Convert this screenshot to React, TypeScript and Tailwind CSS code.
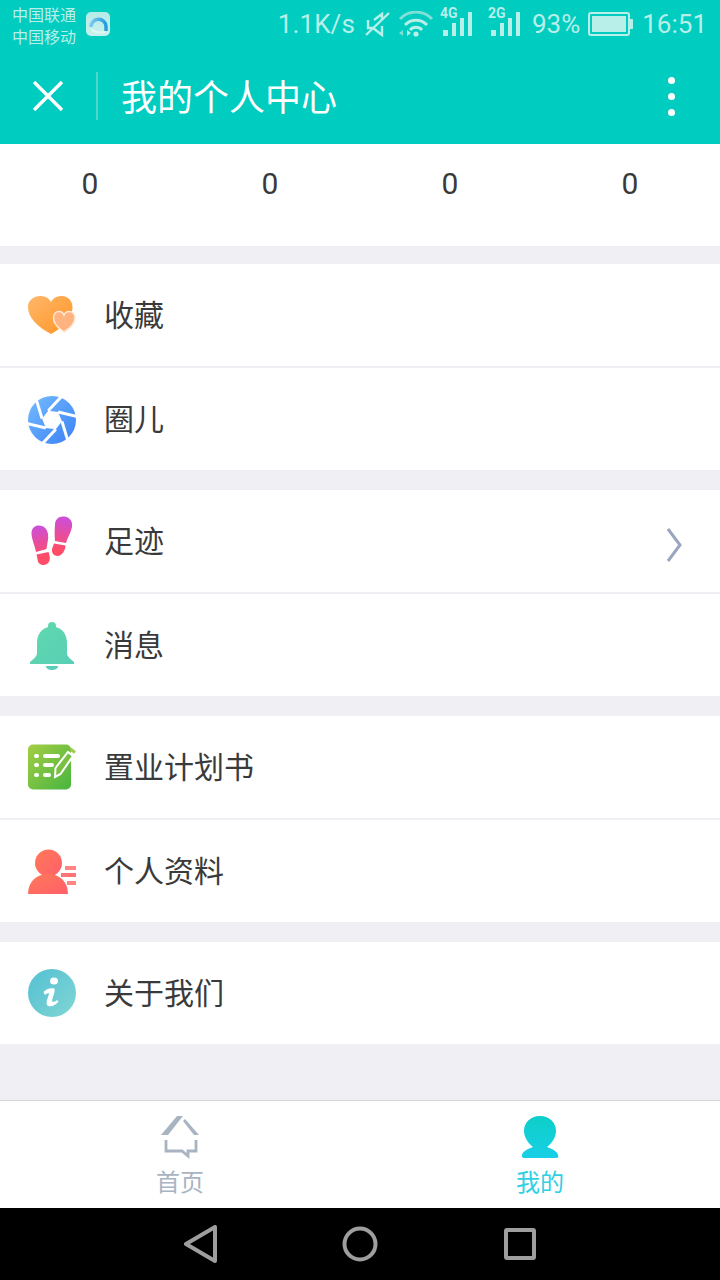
import React from "react";

const cjk = "font-['Noto_Sans_CJK_SC',sans-serif]";
const stat = "font-['Roboto',sans-serif] text-[26px] leading-none text-[#b8efe9]";

function Signal({ label, className = "" }: { label: string; className?: string }) {
  return (
    <div className={"relative w-[32px] h-[36px] " + className}>
      <span className="absolute left-0 top-[6px] font-['Roboto',sans-serif] font-bold text-[14px] leading-none text-[#b8efe9]">{label}</span>
      <svg width="32" height="36" viewBox="0 0 32 36" className="absolute left-0 top-0" fill="#b8efe9">
        <rect x="3" y="30" width="5" height="6" />
        <rect x="12" y="23" width="4" height="13" />
        <rect x="20" y="18" width="4" height="18" />
        <rect x="28" y="12" width="4" height="24" />
      </svg>
    </div>
  );
}

function StatusBar() {
  return (
    <div className="h-[48px] flex items-center relative pl-[12px] pr-[13px]">
      <div className={cjk + " text-[16px] leading-[22px] text-[#b8efe9] w-[66px] mt-[2px]"}>
        <div>中国联通</div>
        <div>中国移动</div>
      </div>
      <svg width="24" height="24" viewBox="0 0 24 24" className="ml-[8px] mb-[1px]">
        <defs>
          <linearGradient id="qq" x1="0" y1="0" x2="0" y2="1">
            <stop offset="0" stopColor="#b6ebe8" />
            <stop offset="1" stopColor="#c8f1ec" />
          </linearGradient>
          <linearGradient id="qq2" x1="0" y1="0" x2="1" y2="0">
            <stop offset="0" stopColor="#7cc8ee" />
            <stop offset="1" stopColor="#1f9ee0" />
          </linearGradient>
        </defs>
        <rect x="0" y="0" width="24" height="24" rx="5" fill="url(#qq)" />
        <path d="M5 15A7.500 7.500 0 0 1 20 14.500V19" fill="none" stroke="url(#qq2)" strokeWidth="3.500" />
        <path d="M5.500 17C8 21 13 21 20 20" fill="none" stroke="#dff8f4" strokeWidth="2" />
      </svg>
      <div className="flex-1" />
      <span className={stat + " tracking-[0.1px]"}>1.1K/s</span>
      <svg width="26" height="26" viewBox="0 0 26 26" className="ml-[9px]" fill="none" stroke="#b8efe9" strokeWidth="2.400">
        <path d="M4 9V17H9L18 24V15M18 9V3L10 9" />
        <path d="M2 24L25 2" strokeWidth="2.400" />
      </svg>
      <svg width="36" height="26" viewBox="0 0 36 26" className="ml-[8px]" fill="none">
        <path d="M2 8a22 22 0 0 1 32 0" stroke="#7fe0d8" strokeWidth="3" />
        <path d="M7 14a15 15 0 0 1 22 0" stroke="#b8efe9" strokeWidth="3" />
        <path d="M12 19a8 8 0 0 1 12 0" stroke="#b8efe9" strokeWidth="3" />
        <circle cx="18" cy="23" r="2.600" fill="#b8efe9" />
        <path d="M5 19v6l-4-3z" fill="#7fe0d8" />
        <path d="M9 19v6l4-3z" fill="#b8efe9" />
      </svg>
      <Signal label="4G" className="ml-[6px] mb-[12px]" />
      <Signal label="2G" className="ml-[16px] mb-[12px]" />
      <span className={stat + " ml-[12px]"}>93%</span>
      <svg width="46" height="24" viewBox="0 0 46 24" className="ml-[8px]">
        <rect x="1" y="1" width="40" height="22" rx="2" fill="none" stroke="#b8efe9" strokeWidth="2" />
        <rect x="4" y="4" width="34" height="16" fill="#b8efe9" />
        <rect x="42" y="7" width="3" height="10" fill="#b8efe9" />
      </svg>
      <span className={stat + " ml-[8px]"}>16:51</span>
    </div>
  );
}

function AppBar() {
  return (
    <div className="h-[96px] flex items-center">
      <svg width="32" height="32" viewBox="0 0 32 32" className="ml-[32px]" stroke="#fff" strokeWidth="3.400" fill="none">
        <path d="M2 2l28 28M30 2L2 30" />
      </svg>
      <div className="w-[2px] h-[48px] bg-[#4fd6cd] ml-[32px]" />
      <span className={cjk + " text-[36px] leading-none text-white ml-[23px] mb-[2px]"}>我的个人中心</span>
      <div className="flex-1" />
      <div className="flex flex-col gap-[9px] mr-[45px]">
        <div className="w-[7px] h-[7px] rounded-full bg-white" />
        <div className="w-[7px] h-[7px] rounded-full bg-white" />
        <div className="w-[7px] h-[7px] rounded-full bg-white" />
      </div>
    </div>
  );
}

function Row({ icon, label, right, y = "" }: { icon: React.ReactNode; label: string; right?: React.ReactNode; y?: string }) {
  return (
    <div className="h-[102px] bg-white flex items-center pl-[28px]">
      <div className={"w-[48px] h-[48px] flex items-center justify-center " + y}>{icon}</div>
      <span className={cjk + " text-[30px] leading-none text-[#3a3a3a] ml-[28px] mb-[5px]"}>{label}</span>
      {right}
    </div>
  );
}

const Hearts = (
  <svg width="48" height="40" viewBox="0 -1 48 40">
    <defs>
      <linearGradient id="h1" x1="0" y1="0" x2="1" y2="1">
        <stop offset="0" stopColor="#ffb76a" />
        <stop offset="1" stopColor="#ff9526" />
      </linearGradient>
    </defs>
    <path d="M23 38C10 31 0 22 0 11C0 4 6 0 12 0C17 0 21 2 23 6C25 2 29 0 34 0C40 0 44.500 5 44.500 11C44.500 22 36 31 23 38Z" fill="url(#h1)" />
    <path d="M36 36C29 31.500 25.500 27 25.500 22C25.500 18 28 15.500 31 15.500C33 15.500 35 16.500 36 19C37 16.500 39 15.500 41 15.500C44.500 15.500 47 18 47 22C47 27 43 31.500 36 36Z" fill="#ffb380" stroke="#ffe9d6" strokeWidth="1.500" />
  </svg>
);

const Aperture = (
  <svg width="48" height="48" viewBox="0 0 48 48">
    <defs>
      <linearGradient id="a1" x1="0" y1="0" x2="1" y2="1">
        <stop offset="0" stopColor="#74bcff" />
        <stop offset="1" stopColor="#3a80f5" />
      </linearGradient>
    </defs>
    <circle cx="24" cy="24" r="24" fill="url(#a1)" />
    <g stroke="#fff" strokeWidth="3">
      <path d="M20.200 14.700L34 0" />
      <path d="M20.200 14.700L34 0" transform="rotate(60 24 24)" />
      <path d="M20.200 14.700L34 0" transform="rotate(120 24 24)" />
      <path d="M20.200 14.700L34 0" transform="rotate(180 24 24)" />
      <path d="M20.200 14.700L34 0" transform="rotate(240 24 24)" />
      <path d="M20.200 14.700L34 0" transform="rotate(300 24 24)" />
    </g>
    <polygon points="20.200,14.700 30.100,16.100 33.900,25.300 27.800,33.300 17.900,31.900 14.100,22.700" fill="#fff" />
  </svg>
);

const Feet = (
  <svg width="48" height="50" viewBox="0 0 48 50">
    <defs>
      <linearGradient id="f1" gradientUnits="userSpaceOnUse" x1="8" y1="9" x2="16" y2="48">
        <stop offset="0" stopColor="#c94ee0" />
        <stop offset="0.8" stopColor="#ff4d68" />
      </linearGradient>
      <linearGradient id="f2" gradientUnits="userSpaceOnUse" x1="38" y1="0" x2="30" y2="40">
        <stop offset="0" stopColor="#c94ee0" />
        <stop offset="0.85" stopColor="#ff4d68" />
      </linearGradient>
    </defs>
    <g fill="url(#f1)">
      <path d="M3.500 17C3.500 12 7 9.500 11 9.500C16 9.500 19 13 20 18C20.800 23 19 28 18.500 33L8 36C7 30 3.500 23 3.500 17Z" />
      <path d="M8.500 38.500L20.500 36C22 40 23 45 19 48C15 50 11 49 10 45.500Z" />
    </g>
    <g fill="url(#f2)">
      <path d="M27 9C27 3 31 0 36 0.500C41.500 1 45 5 44 11C43 17 39 22 38 27L27 25C26.500 19 26.500 14 27 9Z" />
      <path d="M26 27.500L37.500 29.500C37.500 34 34 40 29.500 40C25 40 23.500 36 24 33Z" />
    </g>
  </svg>
);

const Bell = (
  <svg width="44" height="48" viewBox="0 0 44 48">
    <defs>
      <linearGradient id="b1" x1="0" y1="0" x2="1" y2="1">
        <stop offset="0" stopColor="#60d9ae" />
        <stop offset="1" stopColor="#58cfb6" />
      </linearGradient>
    </defs>
    <path d="M22 0a4 4 0 0 1 4 4v1C33 7 37 13 37 21V31C37 35 41 37 44 40V42H0V40C3 37 7 35 7 31V21C7 13 11 7 18 5V4a4 4 0 0 1 4 -4Z" fill="url(#b1)" />
    <path d="M16 44H28C28 47 24.500 48 22 48C19.500 48 16 47 16 44Z" fill="#58cfb6" />
  </svg>
);

const Plan = (
  <svg width="48" height="46" viewBox="0 0 48 46">
    <defs>
      <linearGradient id="p1" x1="0" y1="0" x2="1" y2="1">
        <stop offset="0" stopColor="#a5cd45" />
        <stop offset="1" stopColor="#47b53f" />
      </linearGradient>
    </defs>
    <rect x="0" y="0.500" width="43" height="45" rx="5" fill="url(#p1)" />
    <g fill="#fff">
      <rect x="6" y="10" width="5" height="4" rx="2" />
      <rect x="15" y="10" width="17" height="4" rx="2" />
      <rect x="6" y="19" width="5" height="4" rx="2" />
      <rect x="15" y="19" width="11" height="4" rx="2" />
      <rect x="6" y="29" width="5" height="4" rx="2" />
      <rect x="15" y="29" width="8" height="4" rx="2" />
    </g>
    <path d="M27 33L27.500 24L40 8L45 12L32.500 30Z" fill="#7cc043" stroke="#fff" strokeWidth="2" />
    <path d="M42.500 5L47 8.500" stroke="#9ccb45" strokeWidth="3" />
  </svg>
);

const Person = (
  <svg width="48" height="46" viewBox="0 0 48 46">
    <defs>
      <linearGradient id="u1" x1="0" y1="0" x2="1" y2="1">
        <stop offset="0" stopColor="#ff7a58" />
        <stop offset="1" stopColor="#ff5f6a" />
      </linearGradient>
    </defs>
    <circle cx="20.500" cy="14" r="13.500" fill="url(#u1)" />
    <path d="M0 45C0 33 8 25 20 25C32 25 40 33 40 45Z" fill="url(#u1)" />
    <rect x="37" y="17" width="11" height="4" fill="#ff8585" />
    <rect x="33" y="24" width="15" height="4" fill="#ff7474" />
    <rect x="39" y="32" width="9" height="4" fill="#ff8585" />
  </svg>
);

const Info = (
  <svg width="48" height="48" viewBox="0 0 48 48">
    <defs>
      <linearGradient id="i1" x1="0.2" y1="0.2" x2="1" y2="0.9">
        <stop offset="0" stopColor="#5cc4d3" />
        <stop offset="1" stopColor="#7fd5d4" />
      </linearGradient>
    </defs>
    <circle cx="24" cy="24" r="24" fill="url(#i1)" />
    <ellipse cx="26" cy="12" rx="4" ry="3.500" fill="#fff" />
    <path d="M15.500 23C18 19.500 23 18.500 26.500 19.500C27.500 23 24.500 28 24 32C25 33.500 27 33 29 31L30.500 32.500C27.500 37 21 38.500 19 36C17.500 32 21 27.500 21 24C19 24 18 25 17 26Z" fill="#fff" />
  </svg>
);

function HomeTab() {
  return (
    <div className="w-[360px] flex flex-col items-center pt-[15px]">
      <svg width="40" height="44" viewBox="0 0 40 44" className="h-[44px]">
        <path d="M1 19L17 0H23L8 19Z" fill="#a8b4c2" />
        <path d="M25 3L39 19H34L23 5Z" fill="#a8b4c2" />
        <path d="M6 24V35H22L28 40V35H36V24" fill="none" stroke="#a8b4c2" strokeWidth="2.800" />
      </svg>
      <span className={cjk + " text-[24px] leading-none text-[#a8b4c2] mt-[9px]"}>首页</span>
    </div>
  );
}

function MineTab() {
  return (
    <div className="w-[360px] flex flex-col items-center pt-[15px]">
      <svg width="38" height="44" viewBox="0 0 38 44" className="h-[44px]">
        <defs>
          <linearGradient id="m1" x1="0" y1="0" x2="0" y2="1">
            <stop offset="0" stopColor="#0dcfc8" />
            <stop offset="1" stopColor="#18cfe6" />
          </linearGradient>
        </defs>
        <path d="M19 0C29 0 35 7 35 15C35 22 30 28 26 31C31 33 36 35 37 39C38 42 36 42 34 42H4C2 42 0 42 1 39C2 35 7 33 12 31C8 28 3 22 3 15C3 7 9 0 19 0Z" fill="url(#m1)" />
      </svg>
      <span className={cjk + " text-[24px] leading-none text-[#2fd0e4] mt-[9px]"}>我的</span>
    </div>
  );
}

export default function App() {
  return (
    <div className="w-[720px] h-[1280px] bg-[#efeff4] flex flex-col overflow-hidden">
      <div className="bg-[#00ccbf]">
        <StatusBar />
        <AppBar />
      </div>

      <div className="h-[102px] bg-white flex items-start pt-[24px] font-['Roboto',sans-serif] text-[30px] leading-[32px] text-[#3a3a3a]">
        {[0, 0, 0, 0].map((n, i) => (
          <div key={i} className="w-[180px] text-center">{n}</div>
        ))}
      </div>

      <div className="mt-[18px] flex flex-col">
        <Row icon={Hearts} label="收藏" />
        <div className="h-[2px] bg-[#efeff4]" />
        <Row icon={Aperture} label="圈儿" y="mt-[2px]" />
      </div>

      <div className="mt-[20px] flex flex-col">
        <Row
          icon={Feet}
          label="足迹"
          right={
            <svg width="16" height="34" viewBox="0 0 16 34" className="ml-auto mr-[38px] mt-[8px]" fill="none" stroke="#9aa6c0" strokeWidth="3">
              <path d="M2 1L14 17L2 33" />
            </svg>
          }
        />
        <div className="h-[2px] bg-[#efeff4]" />
        <Row icon={Bell} label="消息" y="mt-[2px]" />
      </div>

      <div className="mt-[20px] flex flex-col">
        <Row icon={Plan} label="置业计划书" />
        <div className="h-[2px] bg-[#efeff4]" />
        <Row icon={Person} label="个人资料" y="mt-[2px]" />
      </div>

      <div className="mt-[20px]">
        <Row icon={Info} label="关于我们" />
      </div>

      <div className="mt-[56px] h-[108px] bg-white border-t border-[#d4d4d8] flex">
        <HomeTab />
        <MineTab />
      </div>

      <div className="h-[72px] bg-black flex items-center justify-center">
        <svg width="34" height="38" viewBox="0 0 34 38" fill="none" stroke="#9e9e9e" strokeWidth="4" strokeLinejoin="round">
          <path d="M31 2V36L2 19Z" />
        </svg>
        <svg width="36" height="36" viewBox="0 0 36 36" className="ml-[124px]" fill="none" stroke="#9e9e9e" strokeWidth="4">
          <circle cx="18" cy="18" r="15.500" />
        </svg>
        <svg width="32" height="32" viewBox="0 0 32 32" className="ml-[126px]" fill="none" stroke="#9e9e9e" strokeWidth="4" strokeLinejoin="round">
          <rect x="2" y="2" width="28" height="28" rx="1" />
        </svg>
      </div>
    </div>
  );
}
